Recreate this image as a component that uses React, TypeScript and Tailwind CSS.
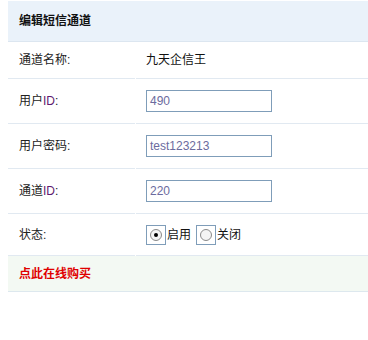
import React from 'react';

const font = { fontFamily: '"Liberation Sans", "Noto Sans CJK SC", sans-serif' };

const Field: React.FC<{ value: string }> = ({ value }) => (
  <div className="w-[126px] h-[22px] border border-[#7f9db9] bg-white flex items-center px-[3px] text-[12px] text-[#6b6b9e]">
    {value}
  </div>
);

const Radio: React.FC<{ checked?: boolean }> = ({ checked }) => (
  <span className="w-[20px] h-[20px] border border-[#7f9db9] bg-white flex items-center justify-center">
    <span className="w-[12px] h-[12px] rounded-full border border-[#8a8a8a] bg-[#f4f4f4] flex items-center justify-center">
      {checked && <span className="w-[4px] h-[4px] rounded-full bg-black"></span>}
    </span>
  </span>
);

const Row: React.FC<{ label: React.ReactNode; h: string; children: React.ReactNode }> = ({ label, h, children }) => (
  <div className={`flex ${h}`}>
    <div className="w-[127px] border-b border-[#e1e9f1] flex items-center pl-[11px] text-[12px] text-[#222]">{label}</div>
    <div className="w-[1px]"></div>
    <div className="flex-1 border-b border-[#e1e9f1] flex items-center pl-[10px] text-[12px] text-[#111]">{children}</div>
  </div>
);

const App: React.FC = () => {
  return (
    <div className="w-[368px] h-[340px] bg-white pt-[1px] pl-[8px]" style={font}>
      <div className="h-[41px] bg-[#eaf2fa] border-b border-[#dce6f0] flex items-center pl-[11px] text-[12px] font-bold text-[#111]">
        编辑短信通道
      </div>
      <Row label="通道名称:" h="h-[37px]">九天企信王</Row>
      <Row label={<span>用户<span className="text-[#5e1a70]">ID</span>:</span>} h="h-[45px]">
        <Field value="490" />
      </Row>
      <Row label="用户密码:" h="h-[45px]">
        <Field value="test123213" />
      </Row>
      <Row label={<span>通道<span className="text-[#5e1a70]">ID</span>:</span>} h="h-[45px]">
        <Field value="220" />
      </Row>
      <Row label="状态:" h="h-[42px]">
        <div className="flex items-center">
          <Radio checked />
          <span className="ml-[1px]">启用</span>
          <span className="ml-[5px]"><Radio /></span>
          <span className="ml-[1px]">关闭</span>
        </div>
      </Row>
      <div className="h-[36px] bg-[#f3f9f3] border-b border-[#dde8ee] flex items-center pl-[11px] text-[12px] font-bold text-[#e00000]">
        点此在线购买
      </div>
    </div>
  );
};

export default App;
